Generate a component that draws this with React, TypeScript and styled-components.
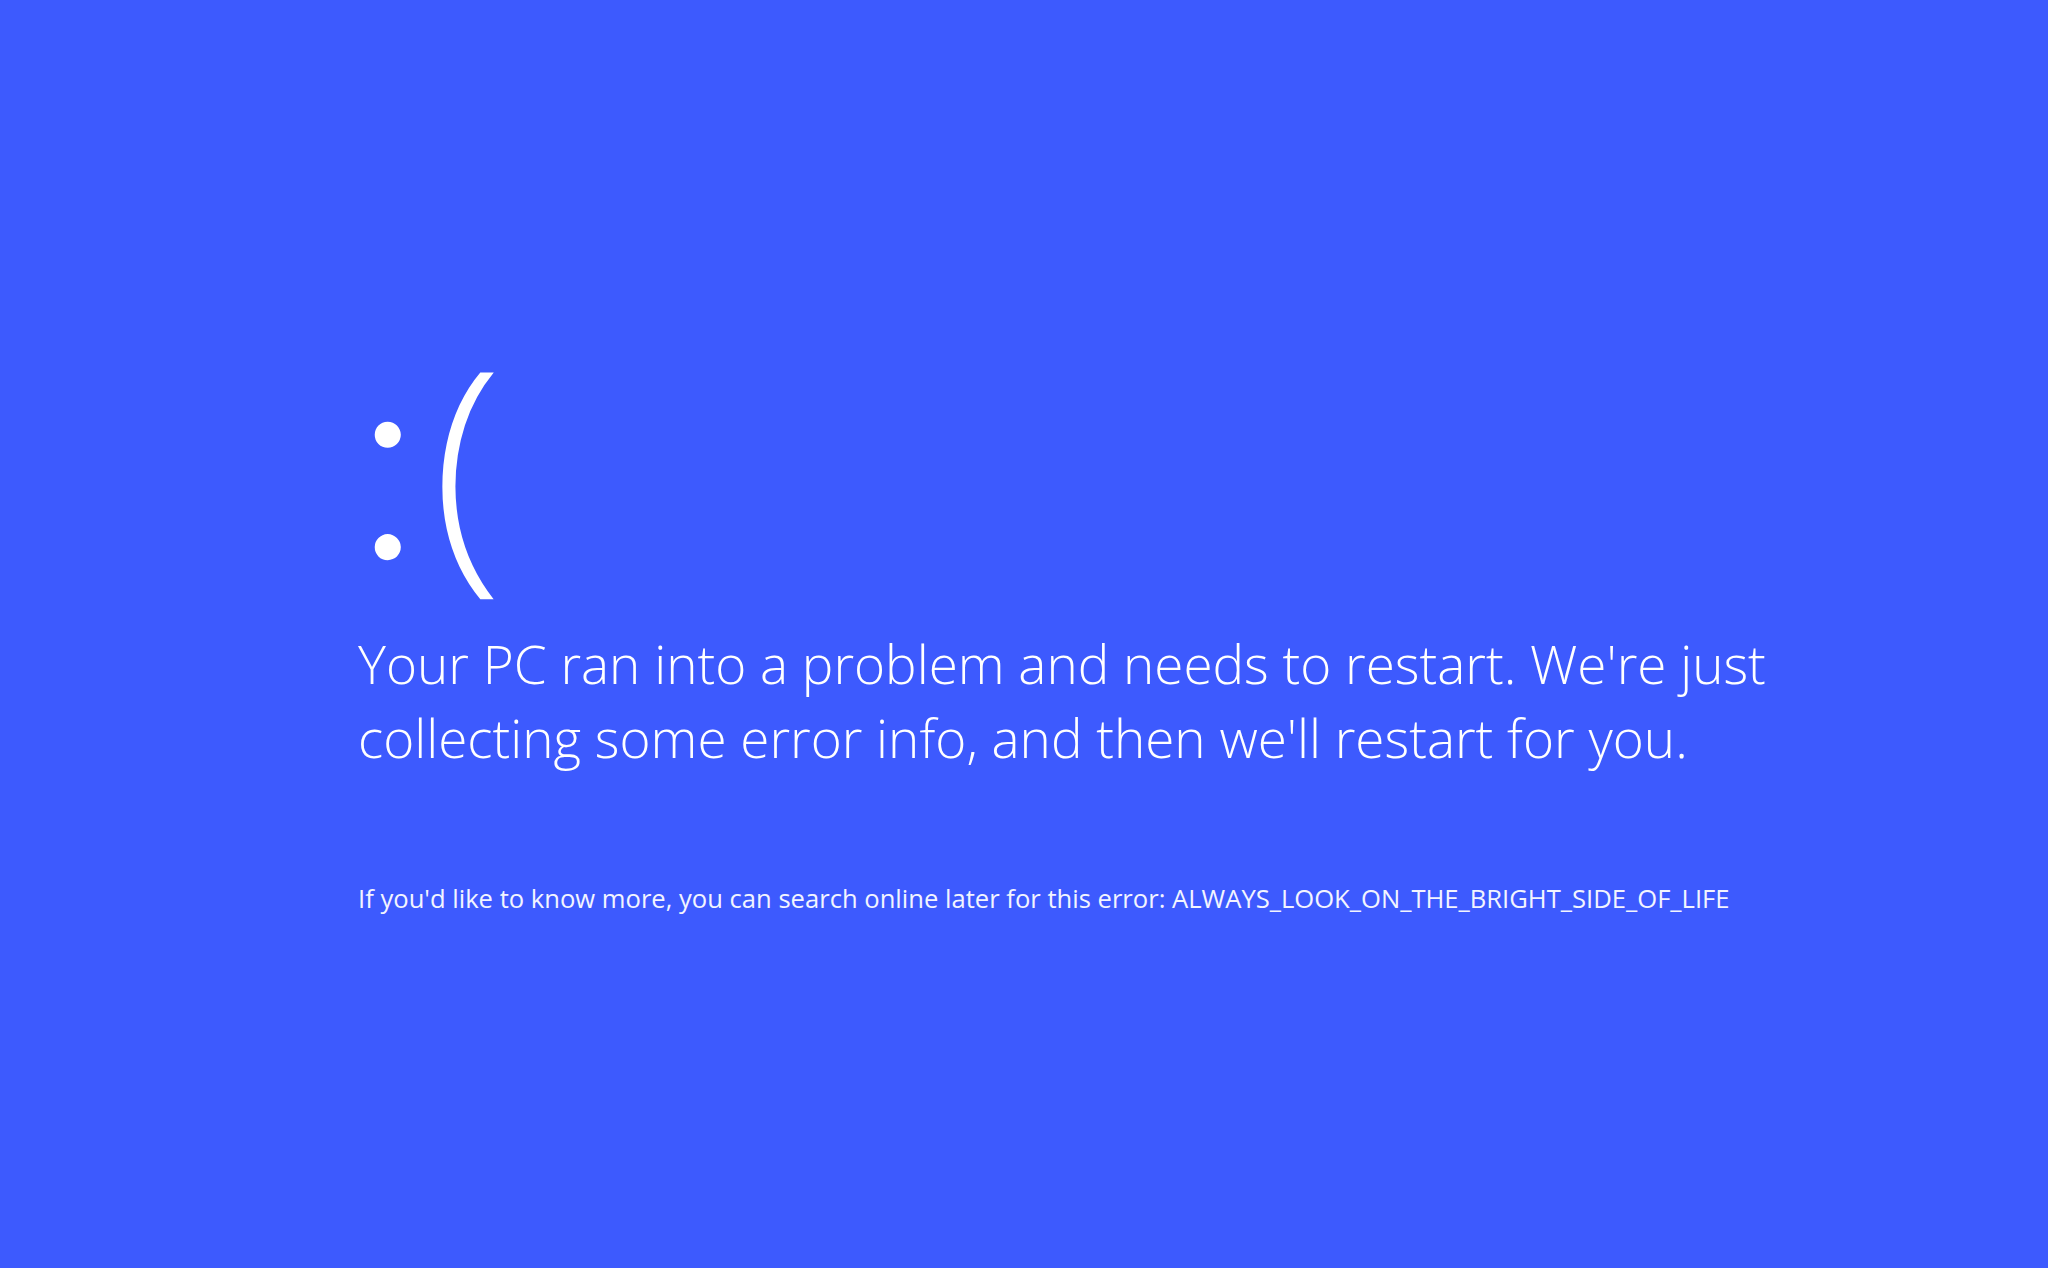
import styled, { createGlobalStyle } from "styled-components";

const GlobalStyle = createGlobalStyle`
  html, body {
    margin: 0;
    padding: 0;
    background-color: #3d5afe;
  }
`;

const Screen = styled.div`
  width: 2048px;
  height: 1268px;
  background-color: #3d5afe;
  color: #ffffff;
  font-family: "Open Sans", "Noto Sans", sans-serif;
  font-weight: 300;
  box-sizing: border-box;
  padding: 327px 0 0 358px;
  overflow: hidden;
`;

const Content = styled.div`
  display: flex;
  flex-direction: column;
`;

const SadFace = styled.div`
  font-size: 260px;
  line-height: 1;
  height: 300px;
  white-space: nowrap;
`;

// round dots for the eyes, thin stroke for the mouth
const Eyes = styled.span`
  font-family: Lato, "Open Sans", sans-serif;
  font-size: 282px;
  font-weight: 300;
  line-height: 0;
  vertical-align: 0;
  margin-left: -4px;
  margin-right: 10px;
`;

const Mouth = styled.span`
  font-weight: 350;
`;

const Message = styled.p`
  margin: 0;
  font-size: 53px;
  line-height: 74px;
  font-weight: 350;
  max-width: 1460px;
`;

const Details = styled.p`
  margin: 109px 0 0 0;
  font-size: 25.6px;
  line-height: 30px;
  font-weight: 400;
  color: #f2f4ff;
`;

export default function App() {
  return (
    <Screen>
      <GlobalStyle />
      <Content>
        <SadFace>
          <Eyes>:</Eyes>
          <Mouth>(</Mouth>
        </SadFace>
        <Message>
          Your PC ran into a problem and needs to restart. We're just collecting
          some error info, and then we'll restart for you.
        </Message>
        <Details>
          If you'd like to know more, you can search online later for this
          error: ALWAYS_LOOK_ON_THE_BRIGHT_SIDE_OF_LIFE
        </Details>
      </Content>
    </Screen>
  );
}
